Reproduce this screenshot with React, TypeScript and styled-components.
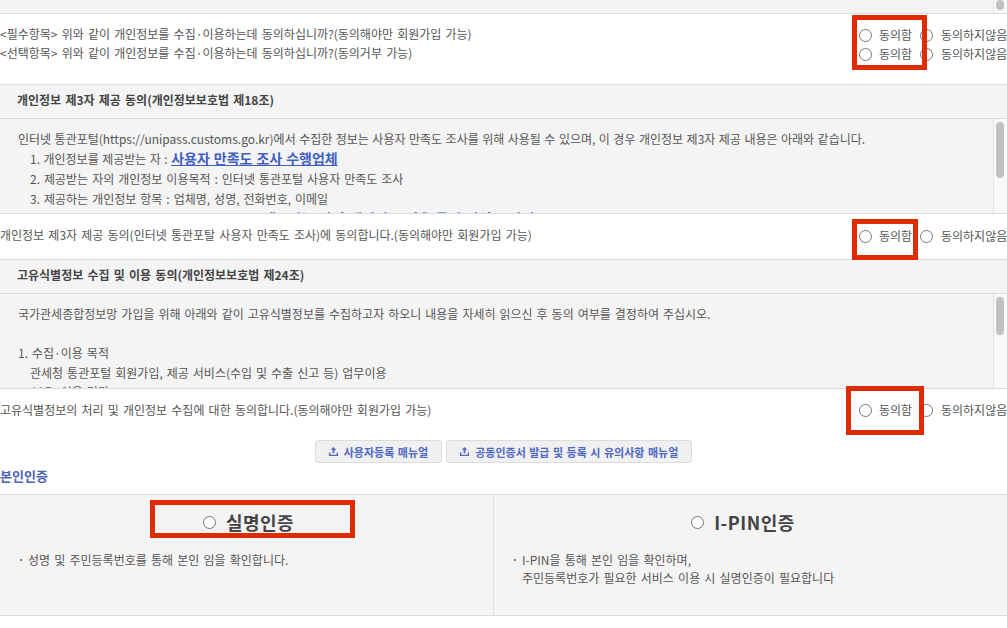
import React from 'react'
import styled, { createGlobalStyle } from 'styled-components'

const GlobalStyle = createGlobalStyle`
  html, body {
    margin: 0;
    padding: 0;
    background: #fff;
    overflow: hidden;
  }
  body {
    font-family: 'Noto Sans CJK KR', 'Noto Sans', sans-serif;
    font-size: 12px;
    color: #555;
    word-spacing: 1.5px;
  }
`

const Page = styled.div`
  position: relative;
  width: 1007px;
  height: 628px;
  overflow: hidden;
`

const TopStub = styled.div`
  display: flex;
  justify-content: flex-end;
  height: 13px;
  background: #f4f4f4;
  border-bottom: 1px solid #ddd;
`

const Track = styled.div<{ $thumbTop: number; $thumbHeight: number }>`
  flex: none;
  width: 14px;
  padding: ${p => p.$thumbTop}px 3px 0 2px;
  box-sizing: border-box;
  background: #f9f9f9;
  border-left: 1px solid #e4e4e4;

  &::before {
    content: '';
    display: block;
    height: ${p => p.$thumbHeight}px;
    border-radius: 4px;
    background: #c1c1c1;
  }
`

const AgreeRow = styled.div<{ $height: number }>`
  display: flex;
  justify-content: space-between;
  height: ${p => p.$height}px;
  box-sizing: border-box;
  background: #fff;
  border-bottom: 1px solid #ddd;
`

const LastRow = styled(AgreeRow)`
  border-bottom: 0;
`

const Questions = styled.div<{ $top: number }>`
  padding-top: ${p => p.$top}px;
  line-height: 19px;
  white-space: nowrap;
`

const Choices = styled.div<{ $top: number }>`
  flex: none;
  width: 148px;
  padding-top: ${p => p.$top}px;
`

const ChoiceLine = styled.div`
  display: flex;
  align-items: center;
  height: 19px;
  white-space: nowrap;
`

const Radio = styled.input.attrs({ type: 'radio' })`
  flex: none;
  width: 13px;
  height: 13px;
  margin: 0;
`

const ChoiceLabel = styled.span<{ $width: number; $left: number }>`
  flex: none;
  width: ${p => p.$width}px;
  margin-left: ${p => p.$left}px;
  margin-top: -2px;
`

const SectionHead = styled.div`
  height: 34px;
  box-sizing: border-box;
  padding-left: 17px;
  line-height: 30px;
  font-weight: 700;
  color: #444;
  background: #f4f4f4;
  border-bottom: 1px solid #ddd;
`

const ScrollBox = styled.div`
  display: flex;
  height: 95px;
  box-sizing: border-box;
  background: #f4f4f4;
  border-bottom: 1px solid #ddd;
`

const ScrollText = styled.div<{ $lineHeight: number }>`
  flex: 1;
  min-width: 0;
  overflow: hidden;
  padding: 10px 0 0 18px;
  line-height: ${p => p.$lineHeight}px;
  white-space: nowrap;
  word-spacing: 1.3px;
`

const TightLines = styled.div`
  word-spacing: 0.8px;
`

const Indent = styled.div`
  padding-left: 12px;
`

const BigLink = styled.a`
  font-size: 14px;
  line-height: 1;
  font-weight: 700;
  color: #3f5fc4;
  text-decoration: underline;
`

const ButtonBar = styled.div`
  display: flex;
  justify-content: center;
  gap: 4px;
`

const ManualButton = styled.button`
  display: flex;
  align-items: center;
  gap: 5px;
  height: 23px;
  padding: 0 13px 0 12px;
  font: 700 11px 'Noto Sans CJK KR', sans-serif;
  word-spacing: 1px;
  color: #4f69c6;
  background: #f0f0f0;
  border: 1px solid #ddd;
  border-radius: 3px;
`

const BlockTitle = styled.h3`
  margin: 0;
  height: 31px;
  font-size: 13px;
  line-height: 25px;
  font-weight: 700;
  color: #4a62b8;
`

const AuthTable = styled.div`
  display: grid;
  grid-template-columns: 493px 1fr;
  height: 122px;
  box-sizing: border-box;
  background: #f4f4f4;
  border-top: 1px solid #ddd;
  border-bottom: 1px solid #ddd;
`

const AuthCell = styled.div`
  & + & {
    border-left: 1px solid #ddd;
  }
`

const AuthHead = styled.label<{ $left?: number; $right?: number }>`
  display: flex;
  align-items: center;
  justify-content: center;
  gap: 10px;
  height: 56px;
  box-sizing: border-box;
  padding: 0 ${p => p.$right || 0}px 2px ${p => p.$left || 0}px;
  font-size: 18px;
  letter-spacing: 0.5px;
  font-weight: 700;
  color: #444;
`

const AuthNote = styled.div`
  position: relative;
  margin-left: 28px;
  line-height: 18px;

  &::before {
    content: '';
    position: absolute;
    left: -8px;
    top: 8px;
    width: 2px;
    height: 2px;
    background: #777;
  }
`

const RedBox = styled.div<{ $x: number; $y: number; $w: number; $h: number }>`
  position: absolute;
  left: ${p => p.$x}px;
  top: ${p => p.$y}px;
  width: ${p => p.$w}px;
  height: ${p => p.$h}px;
  box-sizing: border-box;
  border: 5px solid #de2b00;
`

const UploadIcon = () => (
  <svg width="11" height="11" viewBox="0 0 12 12" fill="#4f69c6" aria-hidden="true">
    <path d="M6 1 9 4.4H7V8H5V4.4H3Z" />
    <path d="M1 7h1.6v2.6h6.8V7H11v4H1Z" />
  </svg>
)

const Choice = ({ name }: { name: string }) => (
  <ChoiceLine>
    <Radio name={name} />
    <ChoiceLabel $width={41} $left={7}>동의함</ChoiceLabel>
    <Radio name={name} />
    <ChoiceLabel $width={66} $left={8}>동의하지않음</ChoiceLabel>
  </ChoiceLine>
)

const App = () => {
  return (
    <Page>
      <GlobalStyle />
      <TopStub>
        <Track $thumbTop={0} $thumbHeight={10} />
      </TopStub>

      <AgreeRow $height={71}>
        <Questions $top={10}>
          &lt;필수항목&gt; 위와 같이 개인정보를 수집·이용하는데 동의하십니까?(동의해야만 회원가입 가능)
          <br />
          &lt;선택항목&gt; 위와 같이 개인정보를 수집·이용하는데 동의하십니까?(동의거부 가능)
        </Questions>
        <Choices $top={12}>
          <Choice name="required" />
          <Choice name="optional" />
        </Choices>
      </AgreeRow>

      <SectionHead>개인정보 제3자 제공 동의(개인정보보호법 제18조)</SectionHead>
      <ScrollBox>
        <ScrollText $lineHeight={20}>
          <TightLines>
            인터넷 통관포털(https://unipass.customs.go.kr)에서 수집한 정보는 사용자 만족도 조사를 위해 사용될 수 있으며, 이 경우 개인정보 제3자 제공 내용은 아래와 같습니다.
            <Indent>
              1. 개인정보를 제공받는 자 : <BigLink>사용자 만족도 조사 수행업체</BigLink>
            </Indent>
          </TightLines>
          <Indent>2. 제공받는 자의 개인정보 이용목적 : 인터넷 통관포털 사용자 만족도 조사</Indent>
          <Indent>3. 제공하는 개인정보 항목 : 업체명, 성명, 전화번호, 이메일</Indent>
          <Indent>
            4. 제공받는 자의 개인정보 보유 및 이용기간 : <BigLink>제공받는 자의 개인정보 이용 목적 달성 시까지</BigLink>
          </Indent>
        </ScrollText>
        <Track $thumbTop={3} $thumbHeight={56} />
      </ScrollBox>

      <AgreeRow $height={46}>
        <Questions $top={11}>개인정보 제3자 제공 동의(인터넷 통관포탈 사용자 만족도 조사)에 동의합니다.(동의해야만 회원가입 가능)</Questions>
        <Choices $top={13}>
          <Choice name="third" />
        </Choices>
      </AgreeRow>

      <SectionHead>고유식별정보 수집 및 이용 동의(개인정보보호법 제24조)</SectionHead>
      <ScrollBox>
        <ScrollText $lineHeight={19.5}>
          국가관세종합정보망 가입을 위해 아래와 같이 고유식별정보를 수집하고자 하오니 내용을 자세히 읽으신 후 동의 여부를 결정하여 주십시오.
          <br />
          <br />
          1. 수집·이용 목적
          <Indent>관세청 통관포털 회원가입, 제공 서비스(수입 및 수출 신고 등) 업무이용</Indent>
          2. 보유·이용 기간
        </ScrollText>
        <Track $thumbTop={3} $thumbHeight={38} />
      </ScrollBox>

      <LastRow $height={51}>
        <Questions $top={11}>고유식별정보의 처리 및 개인정보 수집에 대한 동의합니다.(동의해야만 회원가입 가능)</Questions>
        <Choices $top={12}>
          <Choice name="unique" />
        </Choices>
      </LastRow>

      <ButtonBar>
        <ManualButton>
          <UploadIcon />
          사용자등록 매뉴얼
        </ManualButton>
        <ManualButton>
          <UploadIcon />
          공동인증서 발급 및 등록 시 유의사항 매뉴얼
        </ManualButton>
      </ButtonBar>

      <BlockTitle>본인인증</BlockTitle>
      <AuthTable>
        <AuthCell>
          <AuthHead $left={4}>
            <Radio name="auth" />
            실명인증
          </AuthHead>
          <AuthNote>성명 및 주민등록번호를 통해 본인 임을 확인합니다.</AuthNote>
        </AuthCell>
        <AuthCell>
          <AuthHead $right={15}>
            <Radio name="auth" />
            I-PIN인증
          </AuthHead>
          <AuthNote>
            I-PIN을 통해 본인 임을 확인하며,
            <br />
            주민등록번호가 필요한 서비스 이용 시 실명인증이 필요합니다
          </AuthNote>
        </AuthCell>
      </AuthTable>

      <RedBox $x={852} $y={15} $w={75} $h={55} />
      <RedBox $x={852} $y={219} $w={66} $h={41} />
      <RedBox $x={846} $y={386} $w={78} $h={49} />
      <RedBox $x={150} $y={500} $w={205} $h={38} />
    </Page>
  )
}

export default App
